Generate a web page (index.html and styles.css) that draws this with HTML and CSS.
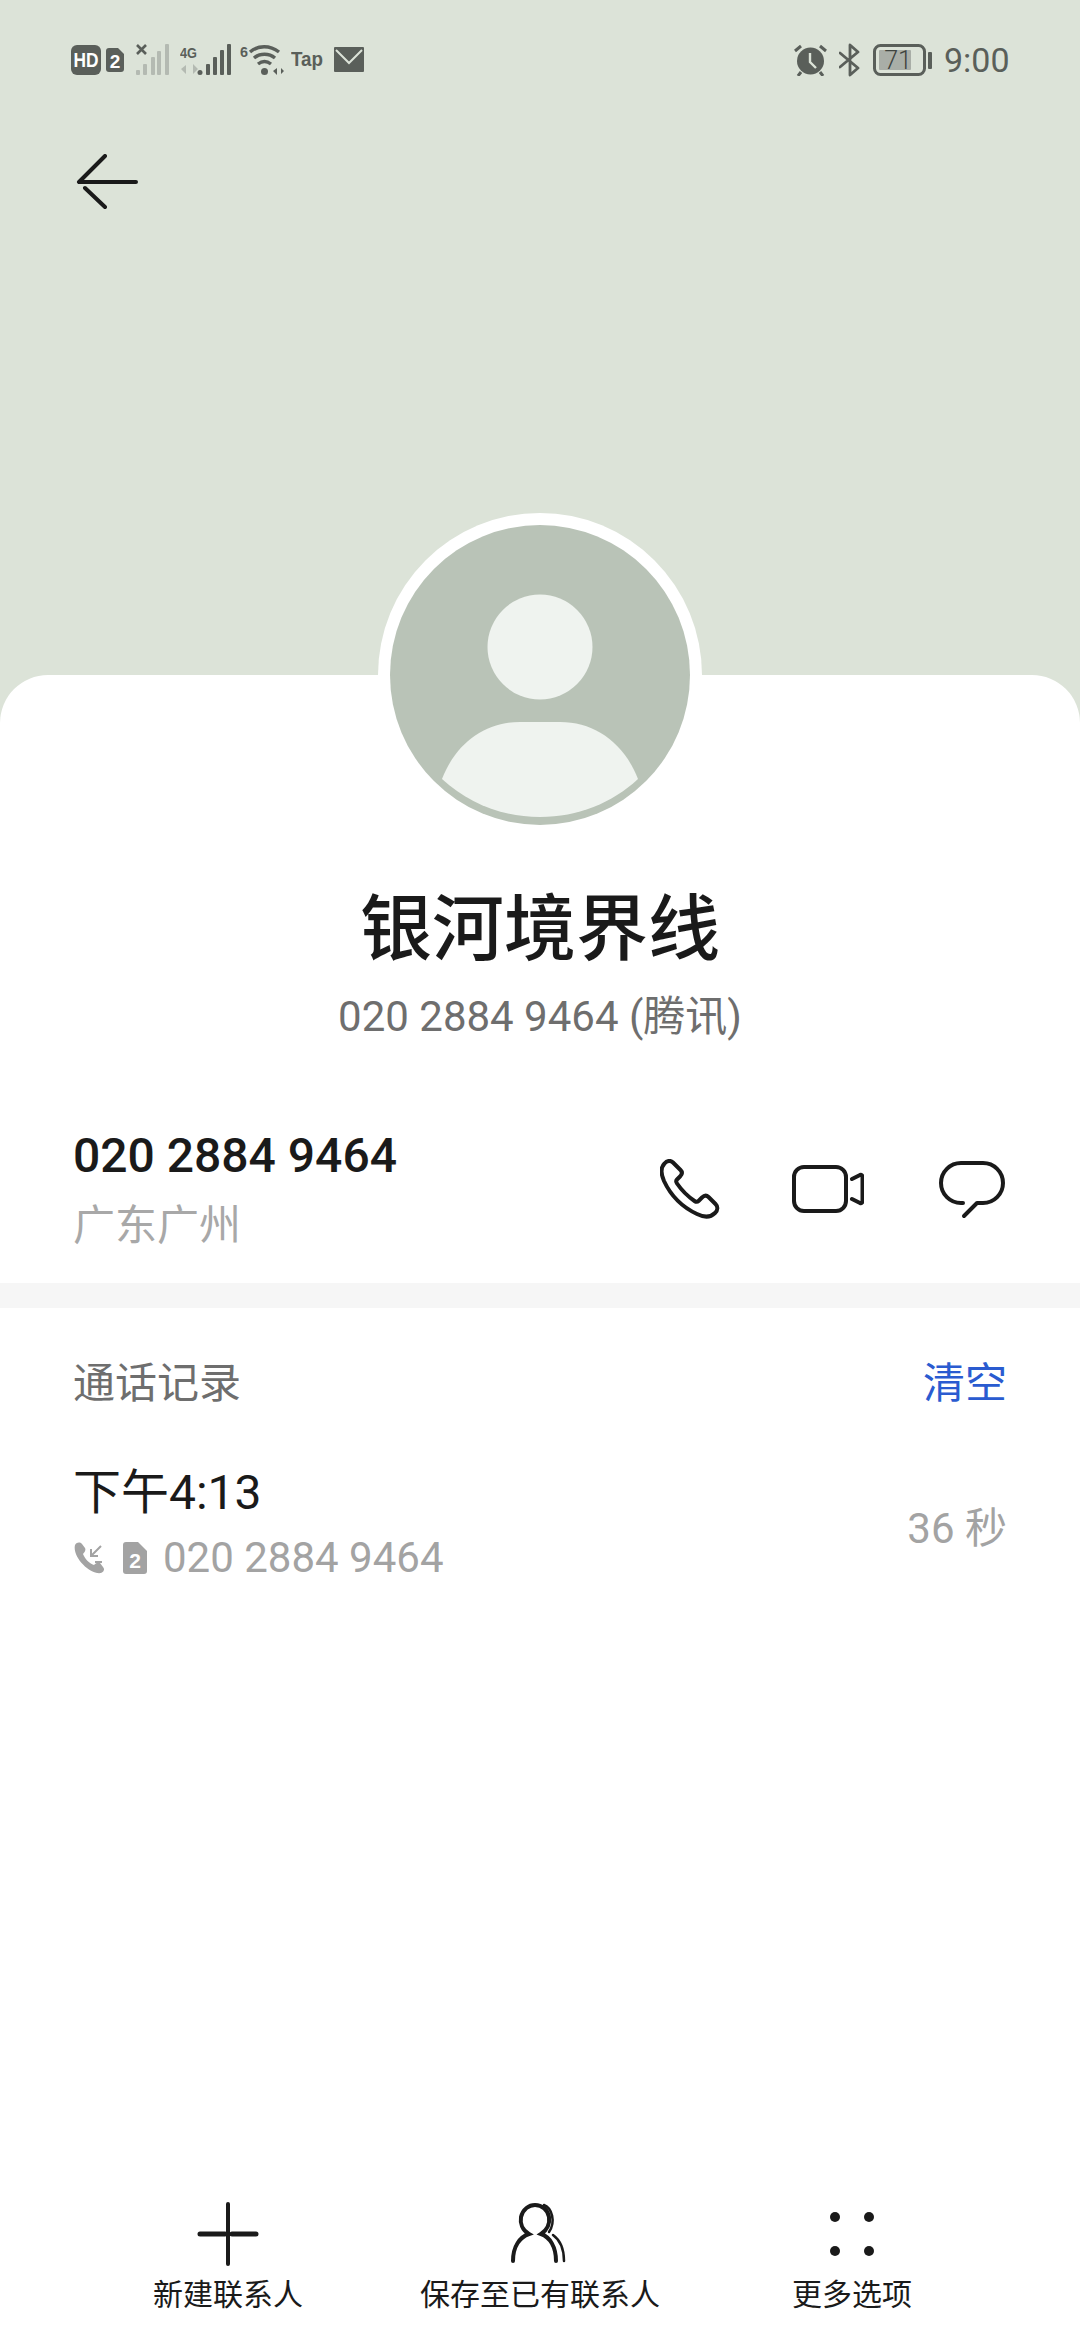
FILE: index.html
```html
<!DOCTYPE html>
<html lang="zh-CN">
<head>
    <meta charset="UTF-8">
    <meta name="viewport" content="width=device-width, initial-scale=1.0">
    <title>银河境界线</title>
    <link rel="stylesheet" href="styles.css">
</head>

<body>
    <div class="page">
        <!-- Status bar and back button -->
        <header class="top">
            <div class="status-bar">
                <div class="status-group">
                    <svg width="30" height="30" viewBox="0 0 30 30"><rect width="30" height="30" rx="6" fill="#5a5f5a"/><text x="15" y="22" class="st-text st-white" font-size="20" text-anchor="middle" textLength="25" lengthAdjust="spacingAndGlyphs">HD</text></svg>
                    <svg width="25" height="30" viewBox="0 0 25 30"><path d="M3 3h9l6 6v15a3 3 0 0 1-3 3H3a3 3 0 0 1-3-3V6a3 3 0 0 1 3-3z" fill="#5a5f5a"/><text x="9" y="23" class="st-text st-white" font-size="19" text-anchor="middle">2</text></svg>
                    <svg width="39" height="32" viewBox="0 0 39 32">
                        <path d="M1 1l9 9M10 1l-9 9" stroke="#5a5f5a" stroke-width="2.6" fill="none"/>
                        <g fill="#b4bab2"><rect x="0" y="26" width="4" height="5" rx="1"/><rect x="7" y="20" width="4" height="11" rx="1"/><rect x="15" y="13" width="4" height="18" rx="1"/><rect x="21" y="7" width="4" height="24" rx="1"/><rect x="29" y="0" width="4" height="31" rx="1"/></g>
                    </svg>
                    <svg width="55" height="32" viewBox="0 0 55 32">
                        <text x="0" y="14" class="st-text" font-size="15" textLength="17" lengthAdjust="spacingAndGlyphs">4G</text>
                        <path d="M1 25l5-4v9zM10 19v12M13 20l5 5-5 5z" fill="#b4bab2"/>
                        <g fill="#5a5f5a"><circle cx="20" cy="28.5" r="2.5"/><rect x="26" y="20" width="4" height="11" rx="1"/><rect x="33" y="13" width="4" height="18" rx="1"/><rect x="40" y="6" width="4" height="25" rx="1"/><rect x="47" y="0" width="4" height="31" rx="1"/></g>
                    </svg>
                    <svg width="46" height="32" viewBox="0 0 46 32">
                        <text x="0" y="13" class="st-text" font-size="14" textLength="8" lengthAdjust="spacingAndGlyphs">6</text>
                        <path d="M10 8c8-7 20-7 29 0M14 14c6-5 15-5 21 0M18 20c4-3 9-3 13 0" stroke="#5a5f5a" stroke-width="3.4" fill="none"/>
                        <circle cx="24.500" cy="27.500" r="3.500" fill="#5a5f5a"/>
                        <path d="M33 27l4-3v7zM39 22v9M41 24l3 3-3 3z" fill="#5a5f5a"/>
                    </svg>
                    <svg width="38" height="32" viewBox="0 0 38 32"><text x="0" y="22" class="st-text" font-size="20" textLength="32" lengthAdjust="spacingAndGlyphs">Tap</text></svg>
                    <svg width="30" height="26" viewBox="0 0 30 26"><rect width="30" height="25" rx="1" fill="#5a5f5a"/><path d="M2 3l13 13L28 3" stroke="#dce3d8" stroke-width="2" fill="none"/></svg>
                </div>
                <div class="status-group status-right">
                    <svg width="33" height="32" viewBox="0 0 33 32">
                        <circle cx="16.500" cy="17" r="13.500" fill="#5a5f5a"/>
                        <path d="M16 9v9l6 6" stroke="#dce3d8" stroke-width="2.400" fill="none"/>
                        <path d="M1 7l6-5M32 7l-6-5M7 28l-3 4M26 28l3 4" stroke="#5a5f5a" stroke-width="3" fill="none"/>
                    </svg>
                    <svg width="22" height="34" viewBox="0 0 22 34"><path d="M1 10l18 15-8 7V2l8 7L1 24" stroke="#5a5f5a" stroke-width="2.800" fill="none" stroke-linejoin="round" stroke-linecap="round"/></svg>
                    <svg width="59" height="32" viewBox="0 0 59 32">
                        <rect x="1.500" y="1.500" width="50" height="29" rx="6" fill="none" stroke="#5a5f5a" stroke-width="3"/>
                        <rect x="6" y="6" width="32" height="20" rx="1" fill="#a9aea7"/>
                        <rect x="55" y="8" width="4" height="17" rx="1" fill="#5a5f5a"/>
                        <text x="25" y="25" class="st-light" font-size="25" text-anchor="middle">71</text>
                    </svg>
                    <span class="clock">9:00</span>
                </div>
            </div>
            <svg class="back" width="62" height="56" viewBox="0 0 62 56">
                <path d="M3 28H60M3 28L29 2M9 34L29 53" stroke="#1a1a1a" stroke-width="4" fill="none" stroke-linecap="round"/>
            </svg>
        </header>

        <main class="card">
            <!-- Avatar sits over the card edge -->
            <div class="avatar">
                <svg width="300" height="300" viewBox="0 0 300 300">
                    <circle cx="150" cy="150" r="150" fill="#b9c3b7"/>
                    <circle cx="150" cy="122" r="52.500" fill="#eff3ef"/>
                    <path d="M52 254C66 218 95 197 130 197H170C205 197 234 218 248 254C222 278 188 292 150 292C112 292 78 278 52 254Z" fill="#eff3ef"/>
                </svg>
            </div>

            <section class="profile">
                <h1 class="name">银河境界线</h1>
                <p class="subtitle">020 2884 9464 (腾讯)</p>
            </section>

            <section class="contact-row">
                <div>
                    <div class="number">020 2884 9464</div>
                    <div class="region">广东广州</div>
                </div>
                <div class="actions">
                    <svg width="60" height="60" viewBox="0 0 60 60"><path d="M4.500 4.500C7 1.500 10.500 1 13 3.500L20.500 11C22.500 13 22 15.500 20 17.500L17 20.500C16 21.500 16 23 17 24.500C21.500 31 28 37.500 34.500 42C36 43 37.500 43 38.500 42L42 38.500C44 36.500 46.500 36 48.500 38L55.500 45C58 47.500 58 51 55 54C51 58 45 59 37 55C22 48 11 37 4 22C.5 14 1 8 4.500 4.500Z" fill="none" stroke="#1a1a1a" stroke-width="4" stroke-linejoin="round"/></svg>
                    <svg width="72" height="48" viewBox="0 0 72 48"><rect x="2" y="2" width="52" height="44" rx="10" fill="none" stroke="#1a1a1a" stroke-width="4"/><path d="M60 14l8-4c1.500-.5 2.500.5 2.500 2v24c0 1.500-1 2.500-2.500 2l-8-4" fill="none" stroke="#1a1a1a" stroke-width="4" stroke-linecap="round" stroke-linejoin="round"/></svg>
                    <svg width="72" height="62" viewBox="0 0 72 62"><path d="M27 45H25A20 20 0 0 1 25 5H47A20 20 0 0 1 47 45H41L28 58" fill="none" stroke="#1a1a1a" stroke-width="4" stroke-linecap="round" stroke-linejoin="round"/></svg>
                </div>
            </section>

            <div class="divider"></div>

            <section class="log">
                <div class="log-head">
                    <span class="log-title">通话记录</span>
                    <span class="log-clear">清空</span>
                </div>
                <div class="log-item">
                    <div>
                        <div class="log-time">下午4:13</div>
                        <div class="log-detail">
                            <svg width="32" height="32" viewBox="0 0 32 32"><path d="M2 3C4 0 7 0 9 2L12 6C13 8 12 10 10 12C12 17 16 21 21 23C23 21 25 20 27 21L30 25C32 27 31 30 28 31C17 33 -1 15 2 3Z" fill="#a3a3a3"/><path d="M28 4L18 14M18 7V14H25M22 20H29" fill="none" stroke="#a3a3a3" stroke-width="2"/></svg>
                            <svg width="24" height="32" viewBox="0 0 24 32"><path d="M3 0H15L24 9V29A3 3 0 0 1 21 32H3A3 3 0 0 1 0 29V3A3 3 0 0 1 3 0Z" fill="#a3a3a3"/><text x="12" y="26" class="st-text st-white" font-size="21" text-anchor="middle">2</text></svg>
                            <span class="log-number">020 2884 9464</span>
                        </div>
                    </div>
                    <span class="log-duration">36 秒</span>
                </div>
            </section>

            <!-- Bottom actions -->
            <nav class="bottom-bar">
                <div class="bar-item">
                    <svg width="64" height="64" viewBox="0 0 64 64"><path d="M32 2V62" stroke="#1a1a1a" stroke-width="4" stroke-linecap="round"/><path d="M4 32H29M36 32H60" stroke="#1a1a1a" stroke-width="5" stroke-linecap="round"/></svg>
                    <span>新建联系人</span>
                </div>
                <div class="bar-item">
                    <svg width="64" height="64" viewBox="0 0 64 64">
                        <path d="M5 59C5 44 12 35 21 32C14 28 12 21 13 15C15 7 21 3 27 3C34 3 40 8 41 15C42 22 39 28 33 32C42 35 48 45 48 59" fill="none" stroke="#1a1a1a" stroke-width="4" stroke-linecap="round"/>
                        <path d="M36 3C44 6 48 20 41 30M45 33C52 38 56 47 56 59" fill="none" stroke="#1a1a1a" stroke-width="2.500" stroke-linecap="round"/>
                    </svg>
                    <span>保存至已有联系人</span>
                </div>
                <div class="bar-item">
                    <svg width="64" height="64" viewBox="0 0 64 64"><g fill="#1a1a1a"><circle cx="15" cy="15" r="5"/><circle cx="49" cy="15" r="5"/><circle cx="15" cy="49" r="5"/><circle cx="49" cy="49" r="5"/></g></svg>
                    <span>更多选项</span>
                </div>
            </nav>
        </main>
    </div>
</body>
</html>
```

FILE: styles.css
```css
* {
    box-sizing: border-box;
}

body {
    margin: 0;
    font-family: Roboto, "Noto Sans CJK SC", sans-serif;
    color: #1a1a1a;
}

svg {
    display: block;
    flex-shrink: 0;
}

.page {
    width: 1080px;
    height: 2340px;
    display: flex;
    flex-direction: column;
    background: #dce3d8;
    overflow: hidden;
}

/* Top area */
.top {
    height: 675px;
    flex-shrink: 0;
    padding: 43px 72px 0 71px;
}

.status-bar {
    height: 34px;
    display: flex;
    justify-content: space-between;
    align-items: center;
}

.status-group {
    display: flex;
    align-items: center;
    gap: 5px;
}

.status-right {
    gap: 12px;
}

.st-text {
    font-family: "Liberation Sans", sans-serif;
    font-weight: 700;
    fill: #5a5f5a;
}

.st-white {
    fill: #fff;
}

.st-light {
    font-family: Roboto, sans-serif;
    font-weight: 300;
    fill: #3f443f;
}

.clock {
    font-size: 34px;
    line-height: 34px;
    color: #5a5f5a;
    width: 64px;
    white-space: nowrap;
}

.back {
    margin: 77px 0 0 5px;
}

/* Card */
.card {
    flex: 1;
    position: relative;
    display: flex;
    flex-direction: column;
    background: #fff;
    border-radius: 48px 48px 0 0;
}

.avatar {
    position: absolute;
    top: -162px;
    left: 378px;
    width: 324px;
    height: 324px;
    padding: 12px;
    border-radius: 50%;
    background: #fff;
}

.profile {
    padding-top: 205px;
    text-align: center;
}

.name {
    margin: 0;
    font-size: 72px;
    line-height: 100px;
    font-weight: 500;
}

.subtitle {
    margin: 7px 0 0;
    font-size: 42px;
    line-height: 60px;
    color: #6e6e6e;
}

.contact-row {
    margin-top: 74px;
    padding: 0 72px 27px 73px;
    display: flex;
    justify-content: space-between;
    align-items: center;
}

.number {
    font-size: 48px;
    line-height: 70px;
    font-weight: 500;
}

.region {
    margin-top: 5px;
    font-size: 42px;
    line-height: 60px;
    color: #a8a8a8;
}

.actions {
    display: flex;
    align-items: center;
    gap: 72px;
}

.divider {
    height: 25px;
    background: #f6f6f6;
}

/* Call log */
.log {
    padding: 46px 73px 0;
}

.log-head {
    display: flex;
    justify-content: space-between;
    font-size: 42px;
    line-height: 60px;
}

.log-title {
    color: #6e6e6e;
}

.log-clear {
    color: #2a5bd0;
}

.log-item {
    margin-top: 46px;
    display: flex;
    justify-content: space-between;
    align-items: center;
}

.log-time {
    font-size: 48px;
    line-height: 66px;
}

.log-detail {
    margin-top: 2px;
    display: flex;
    align-items: center;
    gap: 16px;
    font-size: 42px;
    line-height: 60px;
    color: #a3a3a3;
}

.log-detail svg + svg {
    margin-left: 2px;
}

.log-duration {
    font-size: 42px;
    color: #a3a3a3;
}

/* Bottom bar */
.bottom-bar {
    margin-top: auto;
    padding: 0 72px 24px;
    display: grid;
    grid-template-columns: repeat(3, 312px);
}

.bar-item {
    display: flex;
    flex-direction: column;
    align-items: center;
    gap: 8px;
    font-size: 30px;
    line-height: 42px;
    white-space: nowrap;
}
```
